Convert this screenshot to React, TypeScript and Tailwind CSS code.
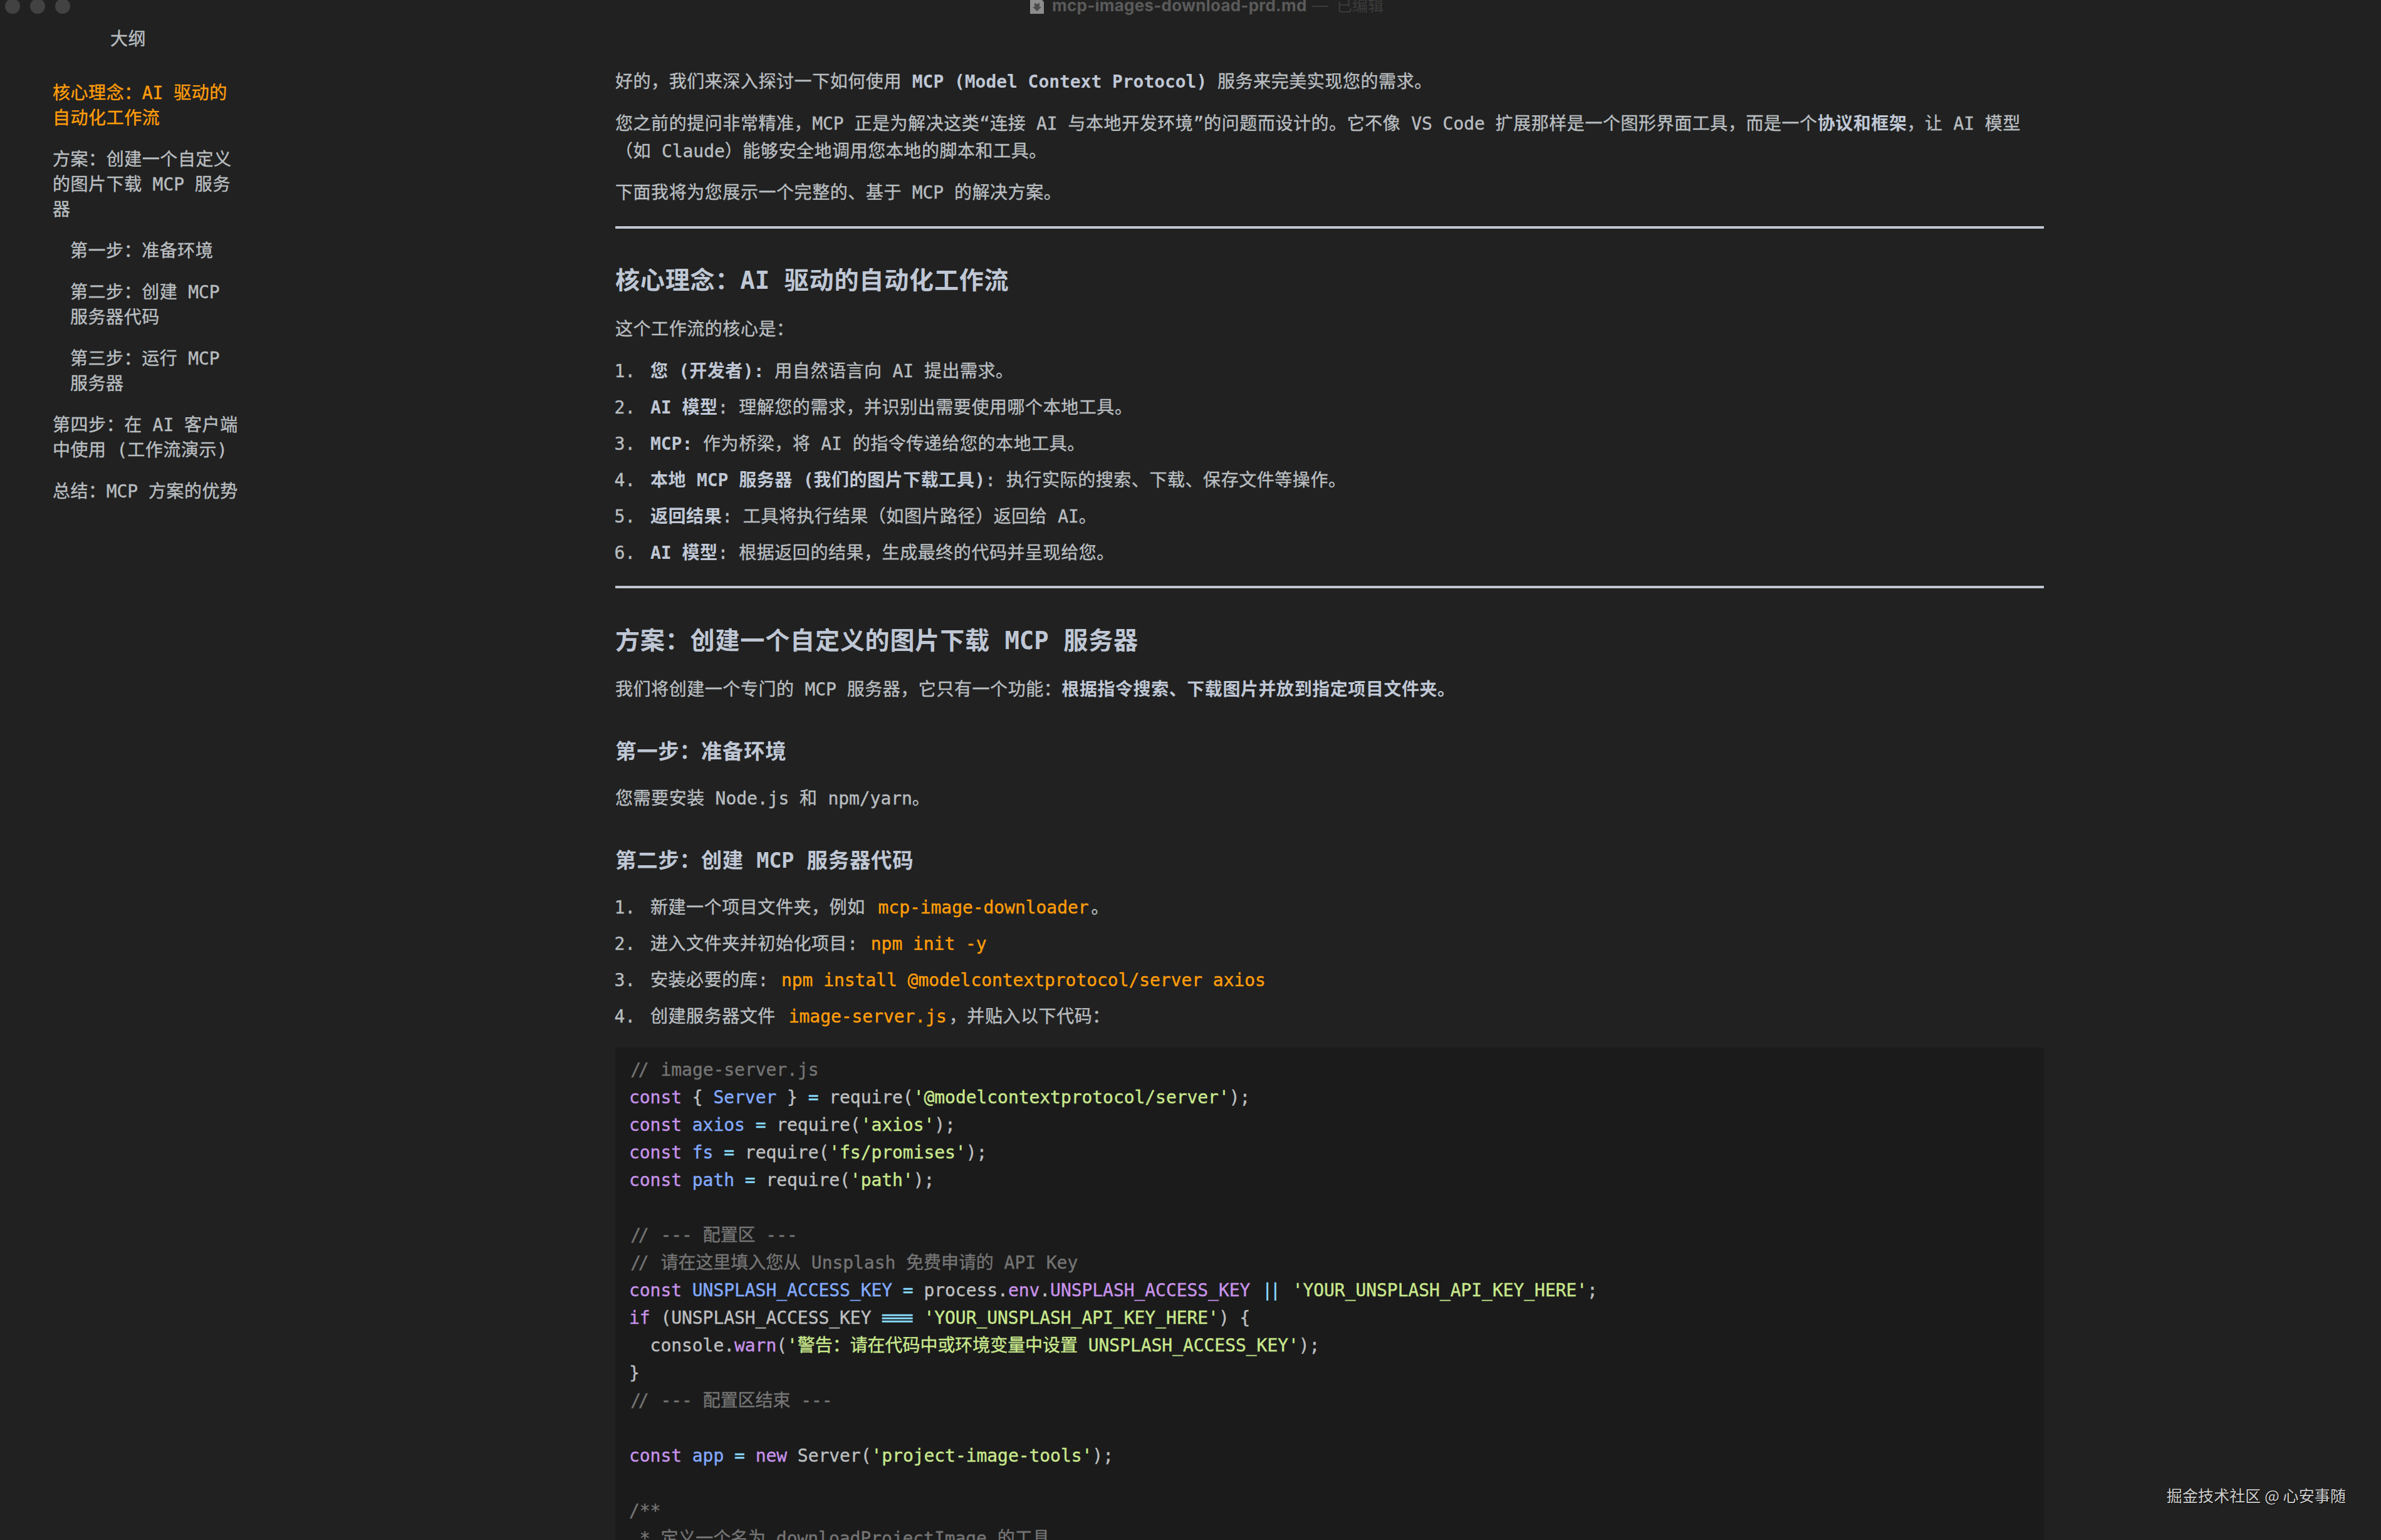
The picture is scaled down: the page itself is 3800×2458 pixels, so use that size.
import type { ReactNode } from 'react';
import { clsx } from 'clsx';

const CJK = /([\u3001-\u9fff\uff00-\uffef]+)/;

// CJK runs get a little more tracking than the monospace latin text
function T({ children }: { children: string }) {
  return (
    <>
      {children.split(CJK).map((part, i) =>
        i % 2 ? (
          <span key={i} className="tracking-[0.02em]">
            {part}
          </span>
        ) : (
          part
        )
      )}
    </>
  );
}

function B({ children }: { children: string }) {
  return (
    <strong className="font-bold text-[#bfc7d5] [-webkit-text-stroke:0]">
      <T>{children}</T>
    </strong>
  );
}

function Code({ children }: { children: string }) {
  return <code className="px-[4px] font-[inherit] text-[#ff9d0a]">{children}</code>;
}

function H2({ children }: { children: string }) {
  return (
    <h2 className="mt-[55.2px] mb-[28.3px] text-[39.1px] leading-[56px] font-bold text-[#bfc7d5] [-webkit-text-stroke:0]">
      <T>{children}</T>
    </h2>
  );
}

function H3({ children }: { children: string }) {
  return (
    <h3 className="mt-[53.5px] mb-[28.3px] text-[33.5px] leading-[48px] font-bold text-[#bfc7d5] [-webkit-text-stroke:0]">
      <T>{children}</T>
    </h3>
  );
}

function Rule() {
  return <div className="mt-[30.8px] h-1 bg-[#bfc5d0]" />;
}

function List({ items }: { items: ReactNode[] }) {
  return (
    <ol className="-ml-[1.5px] flex flex-col gap-[14px]">
      {items.map((item, i) => (
        <li key={i} className="flex">
          <span className="w-[57.5px] shrink-0">{i + 1}.</span>
          <span>{item}</span>
        </li>
      ))}
    </ol>
  );
}

const outline = [
  { text: '核心理念：AI 驱动的自动化工作流', active: true },
  { text: '方案：创建一个自定义的图片下载 MCP 服务器' },
  { text: '第一步：准备环境', nested: true },
  { text: '第二步：创建 MCP 服务器代码', nested: true },
  { text: '第三步：运行 MCP 服务器', nested: true },
  { text: '第四步：在 AI 客户端中使用 (工作流演示)' },
  { text: '总结：MCP 方案的优势' },
];

const tone = {
  k: 'text-[#c792ea]',
  d: 'text-[#82aaff]',
  o: 'text-[#89ddff]',
  s: 'text-[#c9e88d]',
  c: 'text-[#747474]',
  t: 'text-[#bdbfc0]',
  slash: 'text-[#747474] tracking-[-4.4px] pl-[2.2px] pr-[6.6px]',
  pipe: 'text-[#89ddff] tracking-[-4px] pl-[2px] pr-[6px]',
  eq: 'text-[#89ddff] inline-block w-[16.8px] mx-[16.8px] scale-x-[3.3]',
};

type Token = [keyof typeof tone, string];

const source: Token[][] = [
  [['slash', '//'], ['c', ' image-server.js']],
  [['k', 'const'], ['t', ' { '], ['d', 'Server'], ['t', ' } '], ['o', '='], ['t', ' require('], ['s', "'@modelcontextprotocol/server'"], ['t', ');']],
  [['k', 'const '], ['d', 'axios '], ['o', '='], ['t', ' require('], ['s', "'axios'"], ['t', ');']],
  [['k', 'const '], ['d', 'fs '], ['o', '='], ['t', ' require('], ['s', "'fs/promises'"], ['t', ');']],
  [['k', 'const '], ['d', 'path '], ['o', '='], ['t', ' require('], ['s', "'path'"], ['t', ');']],
  [],
  [['slash', '//'], ['c', ' --- 配置区 ---']],
  [['slash', '//'], ['c', ' 请在这里填入您从 Unsplash 免费申请的 API Key']],
  [['k', 'const '], ['d', 'UNSPLASH_ACCESS_KEY '], ['o', '='], ['t', ' process.'], ['k', 'env'], ['t', '.'], ['k', 'UNSPLASH_ACCESS_KEY '], ['pipe', '||'], ['t', ' '], ['s', "'YOUR_UNSPLASH_API_KEY_HERE'"], ['t', ';']],
  [['k', 'if'], ['t', ' (UNSPLASH_ACCESS_KEY '], ['eq', '≡'], ['t', ' '], ['s', "'YOUR_UNSPLASH_API_KEY_HERE'"], ['t', ') {']],
  [['t', '  console.'], ['k', 'warn'], ['t', '('], ['s', "'警告：请在代码中或环境变量中设置 UNSPLASH_ACCESS_KEY'"], ['t', ');']],
  [['t', '}']],
  [['slash', '//'], ['c', ' --- 配置区结束 ---']],
  [],
  [['k', 'const '], ['d', 'app '], ['o', '='], ['k', ' new'], ['t', ' Server('], ['s', "'project-image-tools'"], ['t', ');']],
  [],
  [['c', '/**']],
  [['c', ' * 定义一个名为 downloadProjectImage 的工具']],
];

function TitleBar() {
  return (
    <header className="relative flex h-6 shrink-0 items-start justify-center overflow-hidden font-['Inter','Noto_Sans_CJK_SC',sans-serif] [-webkit-text-stroke:0]">
      <div className="absolute -top-[2px] left-2 flex gap-4">
        <span className="size-6 rounded-full bg-[#424242]" />
        <span className="size-6 rounded-full bg-[#424242]" />
        <span className="size-6 rounded-full bg-[#424242]" />
      </div>
      <div className="ml-[52px] flex items-start">
        <svg width="22" height="22" viewBox="0 0 22 22" className="mr-[13px]">
          <path d="M0 0h19l3 3v19H0z" fill="#8d8d8d" />
          <path d="M7 4l2 2h4l2-2v7h3l-7 7-7-7h3z" fill="#4c4c4c" />
        </svg>
        <div className="-mt-[8px] flex text-[26px] leading-[34px] whitespace-nowrap">
          <span className="w-[404px] font-bold tracking-[0.22px] text-[#5a5a5a]">mcp-images-download-prd.md</span>
          <span className="ml-[11px] w-[39px] text-[#3c3c3c]">—</span>
          <span className="text-[25px] text-[#3c3c3c]">已编辑</span>
        </div>
      </div>
    </header>
  );
}

function Sidebar() {
  return (
    <aside className="w-[982px] shrink-0 pt-[19.4px] leading-[40px]">
      <div className="pl-[176px]">
        <T>大纲</T>
      </div>
      <nav className="mt-[45.7px] ml-[84px] flex w-[300px] flex-col gap-[26px]">
        {outline.map((item) => (
          <a
            key={item.text}
            className={clsx(item.nested && 'pl-[28px]', item.active && 'text-[#ff9d0a]')}
          >
            <T>{item.text}</T>
          </a>
        ))}
      </nav>
    </aside>
  );
}

export default function App() {
  return (
    <div className="relative flex h-[2458px] w-[3800px] flex-col overflow-hidden bg-[#212121] font-['DejaVu_Sans_Mono','Noto_Sans_CJK_SC',monospace] text-[28px] tracking-[-0.002em] text-[#b8bdc0] [-webkit-text-stroke:0.4px]">
      <TitleBar />
      <div className="flex min-h-0 flex-1">
        <Sidebar />
        <main className="w-[2280px] pt-[85.2px] leading-[44px]">
          <div className="flex flex-col gap-[22.4px]">
            <p>
              <T>好的，我们来深入探讨一下如何使用 </T>
              <B>MCP (Model Context Protocol)</B>
              <T> 服务来完美实现您的需求。</T>
            </p>
            <p>
              <T>您之前的提问非常精准，MCP 正是为解决这类“连接 AI 与本地开发环境”的问题而设计的。它不像 VS Code 扩展那样是一个图形界面工具，而是一个</T>
              <B>协议和框架</B>
              <T>，让 AI 模型（如 Claude）能够安全地调用您本地的脚本和工具。</T>
            </p>
            <p>
              <T>下面我将为您展示一个完整的、基于 MCP 的解决方案。</T>
            </p>
          </div>
          <Rule />

          <H2>核心理念：AI 驱动的自动化工作流</H2>
          <p className="mb-[22.4px]">
            <T>这个工作流的核心是：</T>
          </p>
          <List
            items={[
              <><B>您 (开发者):</B><T> 用自然语言向 AI 提出需求。</T></>,
              <><B>AI 模型</B><T>: 理解您的需求，并识别出需要使用哪个本地工具。</T></>,
              <><B>MCP:</B><T> 作为桥梁，将 AI 的指令传递给您的本地工具。</T></>,
              <><B>本地 MCP 服务器 (我们的图片下载工具)</B><T>: 执行实际的搜索、下载、保存文件等操作。</T></>,
              <><B>返回结果</B><T>: 工具将执行结果（如图片路径）返回给 AI。</T></>,
              <><B>AI 模型</B><T>: 根据返回的结果，生成最终的代码并呈现给您。</T></>,
            ]}
          />
          <Rule />

          <H2>方案：创建一个自定义的图片下载 MCP 服务器</H2>
          <p>
            <T>我们将创建一个专门的 MCP 服务器，它只有一个功能：</T>
            <B>根据指令搜索、下载图片并放到指定项目文件夹。</B>
          </p>
          <H3>第一步：准备环境</H3>
          <p>
            <T>您需要安装 Node.js 和 npm/yarn。</T>
          </p>
          <H3>第二步：创建 MCP 服务器代码</H3>
          <List
            items={[
              <><T>新建一个项目文件夹，例如 </T><Code>mcp-image-downloader</Code><T>。</T></>,
              <><T>进入文件夹并初始化项目: </T><Code>npm init -y</Code></>,
              <><T>安装必要的库: </T><Code>npm install @modelcontextprotocol/server axios</Code></>,
              <><T>创建服务器文件 </T><Code>image-server.js</Code><T>，并贴入以下代码：</T></>,
            ]}
          />

          <pre className="mt-[27.8px] bg-[#1b1b1b] pt-[14px] pl-[22px] font-[inherit]">
            {source.map((line, i) => (
              <div key={i} className="h-[44px]">
                {line.map(([kind, text], j) => (
                  <span key={j} className={tone[kind]}>
                    {text}
                  </span>
                ))}
              </div>
            ))}
          </pre>
        </main>
      </div>

      {/* Watermark */}
      <div className="absolute right-[56px] bottom-[54px] font-['Noto_Sans_CJK_SC',sans-serif] text-[25px] leading-[36px] tracking-[0.1px] text-[#cfcfcf] [-webkit-text-stroke:0] [text-shadow:1px_1px_1px_#000]">
        掘金技术社区 @ 心安事随
      </div>
    </div>
  );
}
